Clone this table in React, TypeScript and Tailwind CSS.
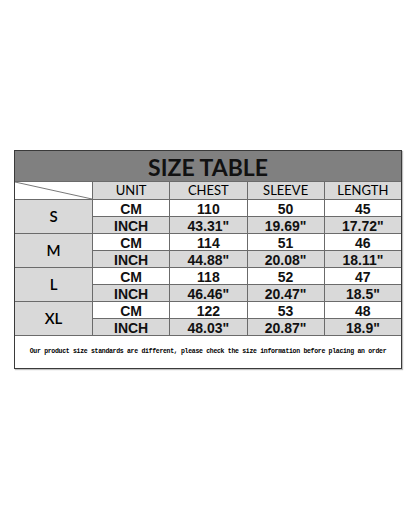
const ROWS = [
  { size: "S", cm: ["110", "50", "45"], inch: ['43.31"', '19.69"', '17.72"'] },
  { size: "M", cm: ["114", "51", "46"], inch: ['44.88"', '20.08"', '18.11"'] },
  { size: "L", cm: ["118", "52", "47"], inch: ['46.46"', '20.47"', '18.5"'] },
  { size: "XL", cm: ["122", "53", "48"], inch: ['48.03"', '20.87"', '18.9"'] },
];

const HEAD = ["UNIT", "CHEST", "SLEEVE", "LENGTH"];

const lato = { fontFamily: "Lato, 'Open Sans', sans-serif" };

function Cell({ children, gray }: { children: React.ReactNode; gray?: boolean }) {
  return (
    <div
      className={
        "flex h-[16px] items-center justify-center pt-px text-[14px] font-bold leading-none text-[#111] " +
        (gray ? "bg-[#d9d9d9]" : "bg-white")
      }
      style={{ fontFamily: "'Liberation Sans', Arial, sans-serif" }}
    >
      {children}
    </div>
  );
}

export default function App() {
  return (
    <div className="min-h-[520px] w-[416px] bg-white px-[14px] pt-[150px]">
      <div className="w-[388px] border border-[#3a3a3a] bg-[#6b6b6b] shadow-[1px_1px_1px_rgba(0,0,0,0.25)]">
        <div className="grid grid-cols-[77px_1fr_1fr_1fr_1fr] gap-px">
          {/* title */}
          <div
            className="col-span-5 flex h-[30px] items-center justify-center bg-[#808080] pt-[2px] text-[23px] font-bold leading-none text-[#111]"
            style={lato}
          >
            SIZE TABLE
          </div>

          {/* header */}
          <div className="relative h-[17px] bg-white">
            <svg className="absolute inset-0 h-full w-full" viewBox="0 0 77 17" preserveAspectRatio="none">
              <line x1="0" y1="0" x2="77" y2="17" stroke="#555" strokeWidth="0.8" />
            </svg>
          </div>
          {HEAD.map((h) => (
            <div
              key={h}
              className="flex h-[17px] items-center justify-center bg-[#d9d9d9] text-[13px] leading-none text-black"
              style={lato}
            >
              {h}
            </div>
          ))}

          {/* body */}
          {ROWS.map((r) => (
            <div key={r.size} className="contents">
              <div
                className="row-span-2 flex items-center justify-center bg-[#d9d9d9] text-[15px] font-semibold leading-none text-black"
                style={lato}
              >
                {r.size}
              </div>
              <Cell>CM</Cell>
              {r.cm.map((v, i) => (
                <Cell key={i}>{v}</Cell>
              ))}
              <Cell gray>INCH</Cell>
              {r.inch.map((v, i) => (
                <Cell key={i} gray>
                  {v}
                </Cell>
              ))}
            </div>
          ))}

          {/* footer */}
          <div className="col-span-5 flex h-[32px] items-center justify-center bg-white">
            <span
              className="whitespace-nowrap text-[6.5px] font-bold leading-none tracking-[-0.3px] text-black"
              style={{ fontFamily: "'Liberation Mono', 'Courier New', monospace" }}
            >
              Our product size standards are different, please check the size information before placing an order
            </span>
          </div>
        </div>
      </div>
    </div>
  );
}
